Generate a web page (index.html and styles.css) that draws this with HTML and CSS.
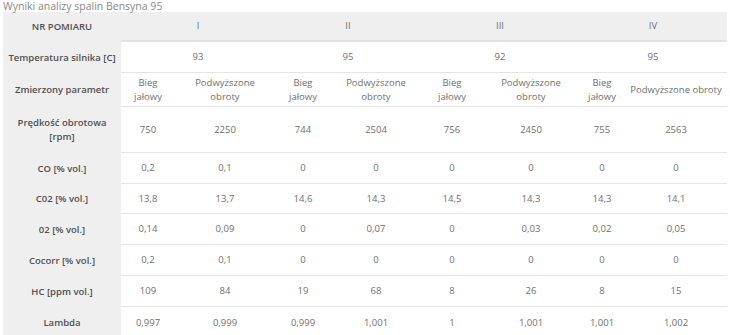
FILE: index.html
```html
<!DOCTYPE html>
<html lang="pl">
<head>
    <meta charset="UTF-8">
    <title>Wyniki analizy spalin</title>
    <link rel="stylesheet" href="styles.css">
</head>
<body>
    <div class="caption">Wyniki analizy spalin Bensyna 95</div>

    <!-- Tabela wyników -->
    <table class="results">
        <colgroup>
            <col class="col-param">
            <col class="col-1">
            <col class="col-2">
            <col class="col-3">
            <col class="col-4">
            <col class="col-5">
            <col class="col-6">
            <col class="col-7">
            <col class="col-8">
        </colgroup>
        <thead>
            <tr class="head-row">
                <th class="param">NR POMIARU</th>
                <th colspan="2">I</th>
                <th colspan="2">II</th>
                <th colspan="2">III</th>
                <th colspan="2">IV</th>
            </tr>
        </thead>
        <tbody>
            <tr class="r-temp">
                <td class="param">Temperatura silnika [C]</td>
                <td colspan="2">93</td>
                <td colspan="2">95</td>
                <td colspan="2">92</td>
                <td colspan="2">95</td>
            </tr>
            <tr class="r-mode">
                <td class="param">Zmierzony parametr</td>
                <td>Bieg<br>jałowy</td>
                <td>Podwyższone<br>obroty</td>
                <td>Bieg<br>jałowy</td>
                <td>Podwyższone<br>obroty</td>
                <td>Bieg<br>jałowy</td>
                <td>Podwyższone<br>obroty</td>
                <td>Bieg<br>jałowy</td>
                <td>Podwyższone obroty</td>
            </tr>
            <tr class="r-rpm">
                <td class="param">Prędkość obrotowa<br>[rpm]</td>
                <td>750</td><td>2250</td><td>744</td><td>2504</td>
                <td>756</td><td>2450</td><td>755</td><td>2563</td>
            </tr>
            <tr class="r-31">
                <td class="param">CO [% vol.]</td>
                <td>0,2</td><td>0,1</td><td>0</td><td>0</td>
                <td>0</td><td>0</td><td>0</td><td>0</td>
            </tr>
            <tr class="r-30">
                <td class="param">C02 [% vol.]</td>
                <td>13,8</td><td>13,7</td><td>14,6</td><td>14,3</td>
                <td>14,5</td><td>14,3</td><td>14,3</td><td>14,1</td>
            </tr>
            <tr class="r-31">
                <td class="param">02 [% vol.]</td>
                <td>0,14</td><td>0,09</td><td>0</td><td>0,07</td>
                <td>0</td><td>0,03</td><td>0,02</td><td>0,05</td>
            </tr>
            <tr class="r-31">
                <td class="param">Cocorr [% vol.]</td>
                <td>0,2</td><td>0,1</td><td>0</td><td>0</td>
                <td>0</td><td>0</td><td>0</td><td>0</td>
            </tr>
            <tr class="r-31">
                <td class="param">HC [ppm vol.]</td>
                <td>109</td><td>84</td><td>19</td><td>68</td>
                <td>8</td><td>26</td><td>8</td><td>15</td>
            </tr>
            <tr class="r-31 last">
                <td class="param">Lambda</td>
                <td>0,997</td><td>0,999</td><td>0,999</td><td>1,001</td>
                <td>1</td><td>1,001</td><td>1,001</td><td>1,002</td>
            </tr>
        </tbody>
    </table>
</body>
</html>
```

FILE: styles.css
```css
body {
    margin: 0;
    padding: 0 3px;
    font-family: 'Open Sans', sans-serif;
    font-size: 9.5px;
    color: #707070;
    background: #FFFFFF;
}

.caption {
    height: 12px;
    font-size: 10.5px;
    line-height: 12px;
    color: #888;
}

.results {
    width: 724px;
    table-layout: fixed;
    border-collapse: separate;
    border-spacing: 0;
}

.col-param { width: 118px; }
.col-1 { width: 54px; }
.col-2 { width: 100px; }
.col-3 { width: 56px; }
.col-4 { width: 90px; }
.col-5 { width: 62px; }
.col-6 { width: 96px; }
.col-7 { width: 46px; }
.col-8 { width: 102px; }

.results th,
.results td {
    padding: 0 2px;
    line-height: 14px;
    text-align: center;
    vertical-align: middle;
    white-space: nowrap;
    border-bottom: 1px solid #e4e4e4;
}

.results th {
    background: #EFEFEF;
    font-weight: 400;
    color: #707070;
    border-bottom: 2px solid #e2e2e2;
}

.results .param {
    background: #EFEFEF;
    font-weight: 600;
    color: #505050;
    border-bottom: none;
}

.results tr.last td {
    border-bottom: none;
}

.head-row { height: 30px; }
.r-temp { height: 31px; }
.r-mode { height: 34px; }
.r-rpm { height: 46px; }
.r-31 { height: 31px; }
.r-30 { height: 30px; }
```
